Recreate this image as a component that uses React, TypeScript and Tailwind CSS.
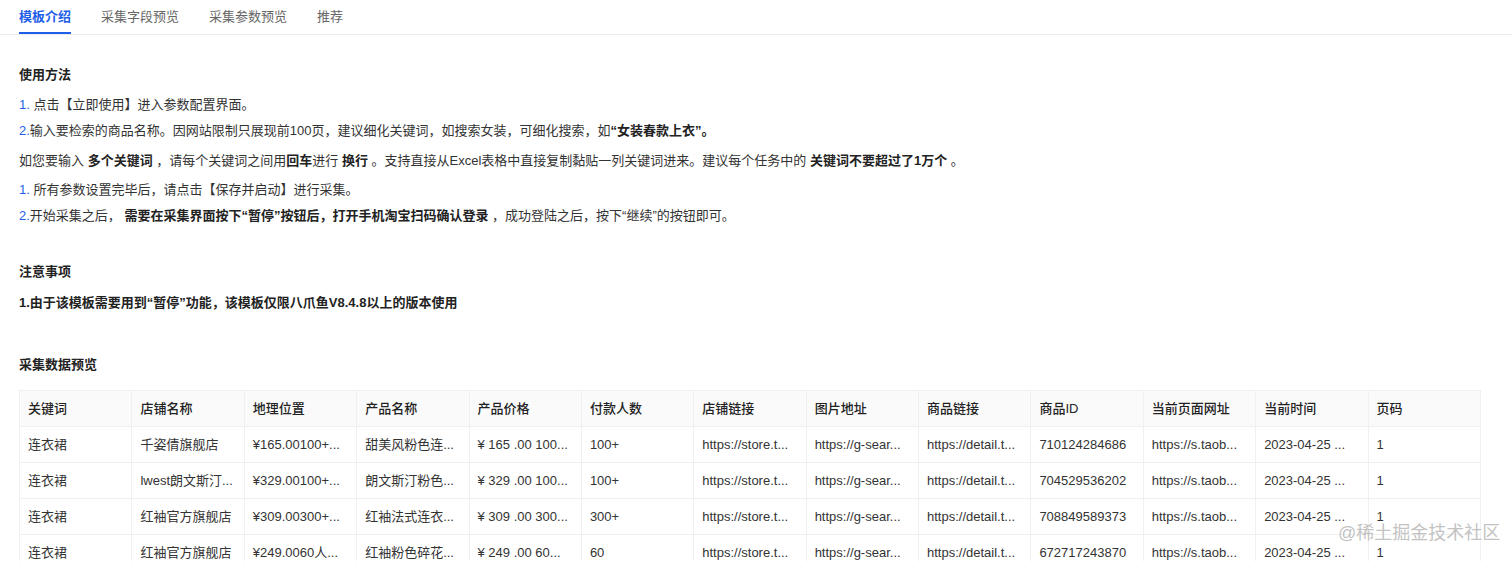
import React from "react";

const headers = ["关键词","店铺名称","地理位置","产品名称","产品价格","付款人数","店铺链接","图片地址","商品链接","商品ID","当前页面网址","当前时间","页码"];
const rows = [
  ["连衣裙","千姿倩旗舰店","¥165.00100+...","甜美风粉色连...","¥ 165 .00 100...","100+","https://store.t...","https://g-sear...","https://detail.t...","710124284686","https://s.taob...","2023-04-25 ...","1"],
  ["连衣裙","lwest朗文斯汀...","¥329.00100+...","朗文斯汀粉色...","¥ 329 .00 100...","100+","https://store.t...","https://g-sear...","https://detail.t...","704529536202","https://s.taob...","2023-04-25 ...","1"],
  ["连衣裙","红袖官方旗舰店","¥309.00300+...","红袖法式连衣...","¥ 309 .00 300...","300+","https://store.t...","https://g-sear...","https://detail.t...","708849589373","https://s.taob...","2023-04-25 ...","1"],
  ["连衣裙","红袖官方旗舰店","¥249.0060人...","红袖粉色碎花...","¥ 249 .00 60...","60","https://store.t...","https://g-sear...","https://detail.t...","672717243870","https://s.taob...","2023-04-25 ...","1"],
];

export default function App() {
  const font = { fontFamily: '"Liberation Sans", "Noto Sans CJK SC", sans-serif' };
  return (
    <div className="relative w-[1512px] h-[561px] overflow-hidden bg-white text-[13px] text-[#333]" style={font}>
      <div className="flex gap-[30px] px-[19px] h-[35px] border-b border-[#ebebeb]">
        <div className="relative flex items-center text-[#1f5fe8] font-bold">
          模板介绍
          <div className="absolute left-0 right-0 bottom-0 h-[2px] bg-[#1f5fe8]" />
        </div>
        <div className="flex items-center text-[#666]">采集字段预览</div>
        <div className="flex items-center text-[#666]">采集参数预览</div>
        <div className="flex items-center text-[#666]">推荐</div>
      </div>

      <div className="pl-[19px] pr-[31px]">
        <div className="mt-[30px] h-[20px] leading-[20px] font-bold text-[#222]">使用方法</div>
        <div className="mt-[10px] h-[20px] leading-[20px]"><span className="text-[#1f5fe8]">1.</span> 点击【立即使用】进入参数配置界面。</div>
        <div className="mt-[6px] h-[20px] leading-[20px]"><span className="text-[#1f5fe8]">2.</span>输入要检索的商品名称。因网站限制只展现前100页，建议细化关键词，如搜索女装，可细化搜索，如<b className="text-[#222]">“女装春款上衣”。</b></div>
        <div className="mt-[10px] h-[20px] leading-[20px]">如您要输入 <b className="text-[#222]">多个关键词</b> ，请每个关键词之间用<b className="text-[#222]">回车</b>进行 <b className="text-[#222]">换行</b> 。支持直接从Excel表格中直接复制黏贴一列关键词进来。建议每个任务中的 <b className="text-[#222]">关键词不要超过了1万个</b> 。</div>
        <div className="mt-[9px] h-[20px] leading-[20px]"><span className="text-[#1f5fe8]">1.</span> 所有参数设置完毕后，请点击【保存并启动】进行采集。</div>
        <div className="mt-[6px] h-[20px] leading-[20px]"><span className="text-[#1f5fe8]">2.</span>开始采集之后， <b className="text-[#222]">需要在采集界面按下“暂停”按钮后，打开手机淘宝扫码确认登录</b> ，成功登陆之后，按下“继续”的按钮即可。</div>

        <div className="mt-[36px] h-[20px] leading-[20px] font-bold text-[#222]">注意事项</div>
        <div className="mt-[11px] h-[20px] leading-[20px] font-bold text-[#222]">1.由于该模板需要用到“暂停”功能，该模板仅限八爪鱼V8.4.8以上的版本使用</div>

        <div className="mt-[42px] h-[20px] leading-[20px] font-bold text-[#222]">采集数据预览</div>

        <table className="mt-[15px] w-full table-fixed border-collapse">
          <thead>
            <tr className="bg-[#fafafa]">
              {headers.map((h, i) => (
                <th key={i} className="h-[36px] px-[8px] text-left font-medium text-[#222] border border-[#f0f0f0] whitespace-nowrap overflow-hidden">{h}</th>
              ))}
            </tr>
          </thead>
          <tbody>
            {rows.map((r, ri) => (
              <tr key={ri}>
                {r.map((c, ci) => (
                  <td key={ci} className="h-[36px] px-[8px] border border-[#f0f0f0] whitespace-nowrap overflow-hidden">{c}</td>
                ))}
              </tr>
            ))}
          </tbody>
        </table>
      </div>

      <div className="absolute left-[1338px] top-[520px] text-[18px] text-[#bbbbbb]/90 whitespace-nowrap">@稀土掘金技术社区</div>
    </div>
  );
}
